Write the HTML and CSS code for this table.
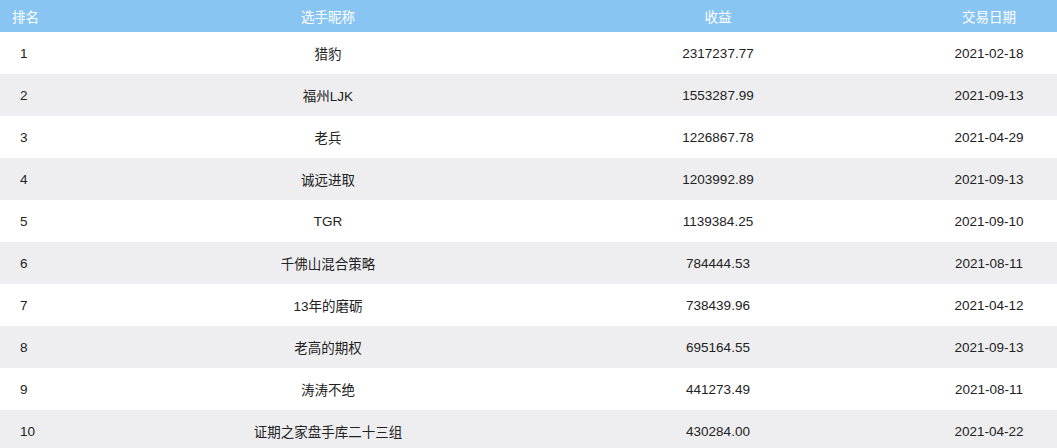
FILE: index.html
```html
<!DOCTYPE html>
<html lang="zh">
<head>
<meta charset="utf-8">
<link rel="stylesheet" href="styles.css">
</head>
<body>
<div class="table">
  <div class="row head">
    <div class="c1">排名</div><div class="c2">选手昵称</div><div class="c3">收益</div><div class="c4">交易日期</div>
  </div>
  <div class="row"><div class="c1">1</div><div class="c2">猎豹</div><div class="c3">2317237.77</div><div class="c4">2021-02-18</div></div>
  <div class="row"><div class="c1">2</div><div class="c2">福州LJK</div><div class="c3">1553287.99</div><div class="c4">2021-09-13</div></div>
  <div class="row"><div class="c1">3</div><div class="c2">老兵</div><div class="c3">1226867.78</div><div class="c4">2021-04-29</div></div>
  <div class="row"><div class="c1">4</div><div class="c2">诚远进取</div><div class="c3">1203992.89</div><div class="c4">2021-09-13</div></div>
  <div class="row"><div class="c1">5</div><div class="c2">TGR</div><div class="c3">1139384.25</div><div class="c4">2021-09-10</div></div>
  <div class="row"><div class="c1">6</div><div class="c2">千佛山混合策略</div><div class="c3">784444.53</div><div class="c4">2021-08-11</div></div>
  <div class="row"><div class="c1">7</div><div class="c2">13年的磨砺</div><div class="c3">738439.96</div><div class="c4">2021-04-12</div></div>
  <div class="row"><div class="c1">8</div><div class="c2">老高的期权</div><div class="c3">695164.55</div><div class="c4">2021-09-13</div></div>
  <div class="row"><div class="c1">9</div><div class="c2">涛涛不绝</div><div class="c3">441273.49</div><div class="c4">2021-08-11</div></div>
  <div class="row"><div class="c1">10</div><div class="c2">证期之家盘手库二十三组</div><div class="c3">430284.00</div><div class="c4">2021-04-22</div></div>
</div>
</body>
</html>
```
FILE: styles.css
```css
html, body {
  margin: 0;
  padding: 0;
  background: #ffffff;
}
body {
  font-family: "Liberation Sans", "Noto Sans CJK SC", sans-serif;
  font-size: 13.5px;
  color: #222222;
  overflow: hidden;
}
.table {
  width: 1057px;
}
.row {
  display: grid;
  grid-template-columns: 141px 374px 406px 136px;
  height: 42px;
  align-items: center;
  background: #ffffff;
}
.row:nth-child(odd) {
  background: #eeeef0;
}
.row.head {
  height: 32px;
  background: #89c5f3;
  color: #ffffff;
}
.c1 {
  padding-left: 20px;
}
.head .c1 {
  padding-left: 12px;
}
.c2, .c3, .c4 {
  text-align: center;
}
```
